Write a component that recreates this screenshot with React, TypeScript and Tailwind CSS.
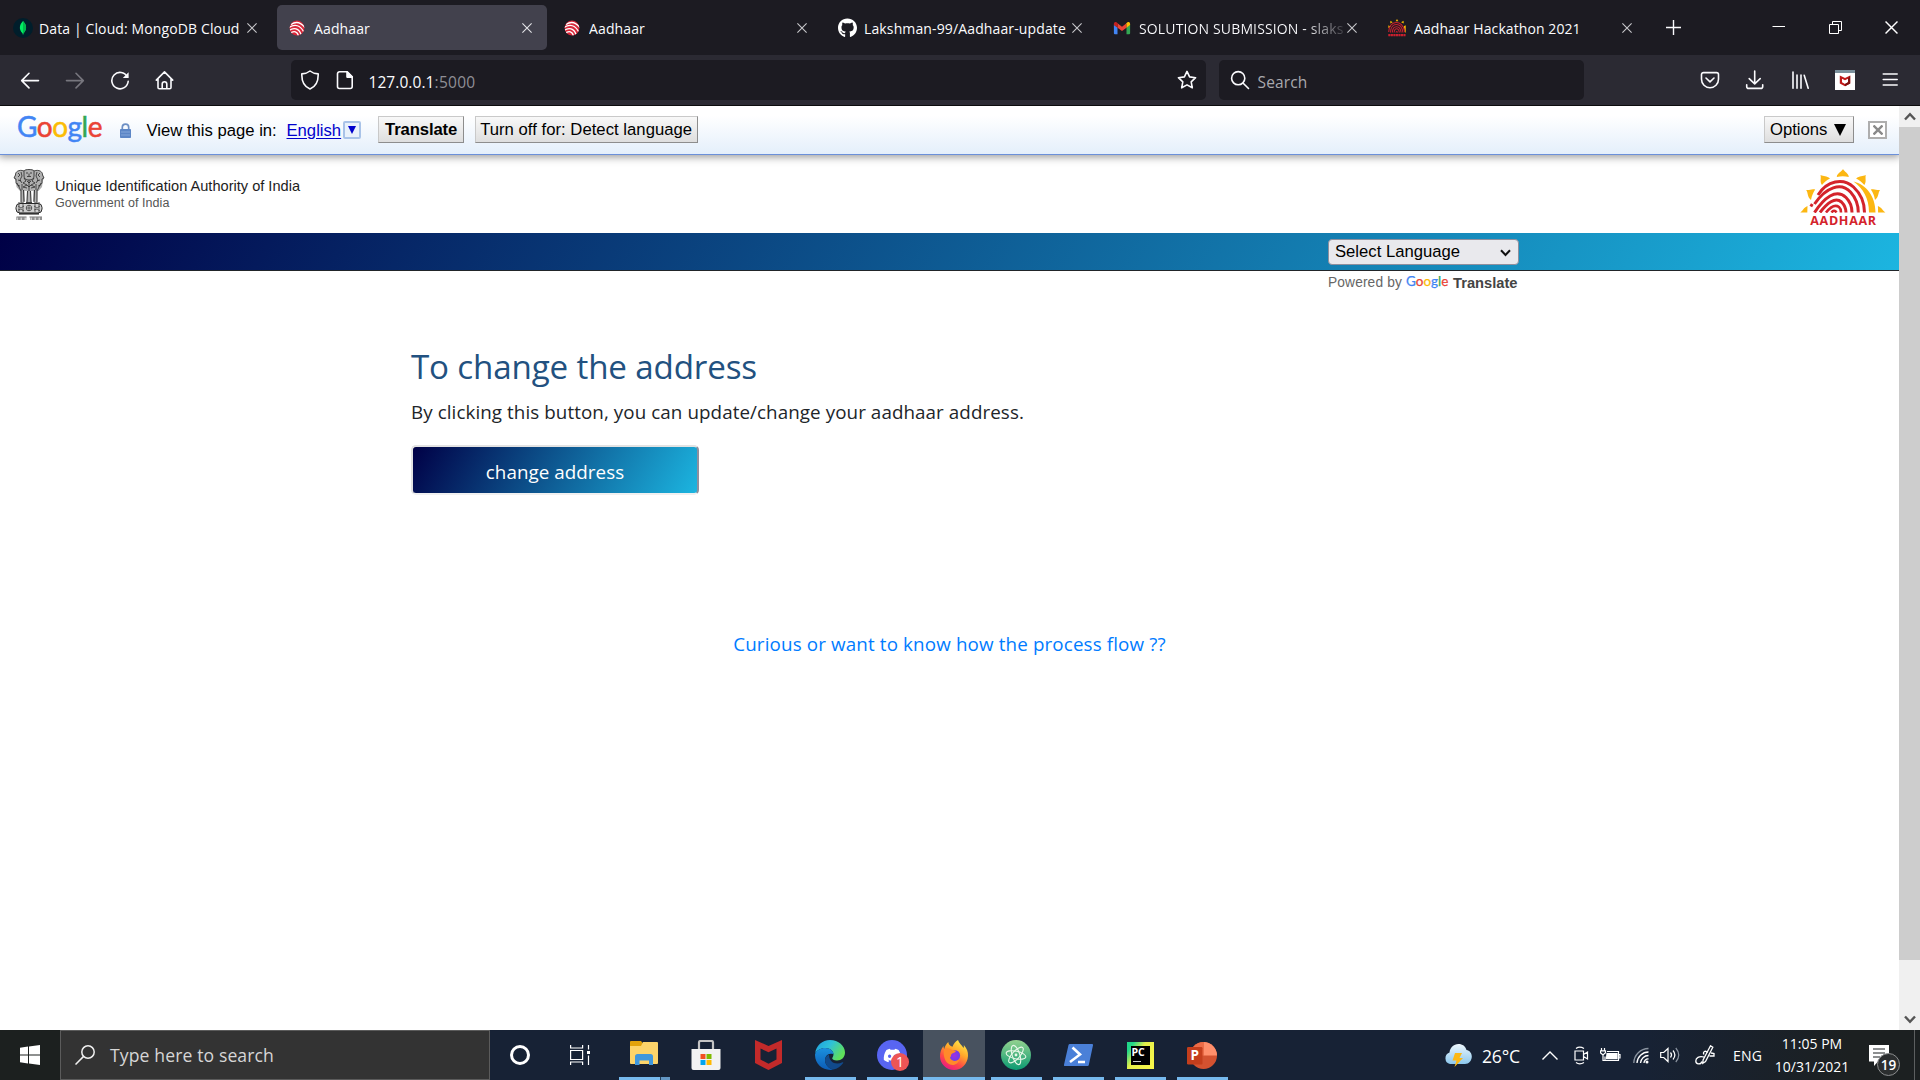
import React, { ReactNode } from "react";
import { FaDiscord, FaGithub } from "react-icons/fa";

const TAB_TEXT = "whitespace-nowrap pt-[2px] text-[14px] leading-[20px] text-[#fbfbfe]";

function Cross({ className }: { className?: string }) {
  return (
    <svg viewBox="0 0 10 10" className={className ?? "h-[10px] w-[10px] text-[#c8c8cc]"} fill="none" stroke="currentColor" strokeWidth="1.1">
      <path d="M.4.4l9.2 9.2M9.6.4L.4 9.6" />
    </svg>
  );
}

function MongoIcon() {
  return (
    <svg viewBox="0 0 20 20" className="h-5 w-5">
      <circle cx="10" cy="10" r="10" fill="#001e2b" />
      <path d="M10 3c3.400 3.600 4.600 8 .5 12.300L10 17l-.5-1.700C5.400 11 6.600 6.600 10 3z" fill="#00ed64" />
      <path d="M10 3c3.400 3.600 4.600 8 .5 12.300L10 17z" fill="#00b84c" />
    </svg>
  );
}

function FingerIcon() {
  return (
    <svg viewBox="0 0 20 20" className="h-5 w-5">
      <defs>
        <clipPath id="fingerClip"><circle cx="9" cy="10" r="7.400" /></clipPath>
      </defs>
      <g clipPath="url(#fingerClip)">
        <rect width="20" height="20" fill="#d8283a" />
        <g fill="none" stroke="#fff" strokeWidth="1.300">
          <path d="M3 6.500C8 3 13 4.500 17 9.500" />
          <path d="M1 9.500C7 5.500 12.500 7.500 15.500 13.500" />
          <path d="M1 12.500C6 9 11 10.500 13 16.500" />
          <path d="M2 15.300C6 12.200 9.500 13.500 10.500 18" />
        </g>
      </g>
    </svg>
  );
}

function GmailIcon() {
  return (
    <svg viewBox="0 0 20 20" className="mr-[2px] h-5 w-5">
      <path d="M1 6.500l4 3V17H2.200A1.200 1.200 0 0 1 1 15.800z" fill="#4285f4" />
      <path d="M15 9.500l4-3v9.300a1.200 1.200 0 0 1-1.200 1.200H15z" fill="#34a853" />
      <path d="M5 4.800l5 3.800 5-3.800v4.900l-5 3.700-5-3.700z" fill="#ea4335" />
      <path d="M1 5.600C1 3.400 3.300 2.900 4.400 4L5 4.800v4.900L1 6.800z" fill="#c5221f" />
      <path d="M19 5.600c0-2.200-2.300-2.700-3.400-1.600l-.6.8v4.900l4-2.900z" fill="#fbbc04" />
    </svg>
  );
}

function SunFavicon() {
  return (
    <svg viewBox="0 0 20 20" className="mr-[2px] h-5 w-5">
      <path d="M8.500 2.500L10 0l1.500 2.500zM2.500 5l.2-3 2.500 1.500zM14.500 3.500L17.300 2l.2 3zM.3 10l.2-3L3 8.500zM17.500 8l2.200-1v8h-1z" fill="#f9b800" />
      <g fill="none" stroke="#c9202e" strokeWidth="1.200">
        <path d="M.8 14.500C.8 1 16.500-.5 18.600 14.500" />
        <path d="M2.800 15C3 3.500 14.800 3 16.600 15" />
        <path d="M4.800 15c.5-8.500 8.500-8.500 9.800 0" />
        <path d="M6.800 15c.7-5.500 4.900-5.500 5.800 0M9 15c.2-1.600 1.400-1.600 1.600 0" />
        <path d="M.3 18h19.400" strokeWidth="2.600" strokeDasharray="2.400 .4" />
      </g>
    </svg>
  );
}

type TabProps = { icon: ReactNode; title: string; track: string; active?: boolean; fade?: boolean };

function Tab({ icon, title, track, active, fade }: TabProps) {
  return (
    <div className={`relative flex h-[45px] w-[270px] shrink-0 items-center rounded-[5px] pl-[11px] ${active ? "bg-[#42414d]" : ""}`}>
      <div className="flex h-5 w-5 shrink-0 items-center justify-center">{icon}</div>
      <div className="ml-[6px] w-[207px] overflow-hidden">
        <div className={`${TAB_TEXT} ${track} ${fade ? "bg-gradient-to-r from-[#fbfbfe] from-80% to-[#fbfbfe]/10 bg-clip-text text-transparent" : ""}`}>{title}</div>
      </div>
      <div className="ml-[1px] shrink-0">
        <Cross className={active ? "h-[10px] w-[10px] text-[#e4e4e8]" : undefined} />
      </div>
    </div>
  );
}

function TabBar() {
  return (
    <div className="flex h-[55px] bg-[#1c1b22] pt-[5px] pl-[2px]">
      <div className="flex gap-[5px]">
        <Tab icon={<MongoIcon />} title="Data | Cloud: MongoDB Cloud" track="tracking-[0.120px]" />
        <Tab icon={<FingerIcon />} title="Aadhaar" track="tracking-[0.13px]" active />
        <Tab icon={<FingerIcon />} title="Aadhaar" track="tracking-[0.13px]" />
        <Tab icon={<FaGithub className="mr-px h-5 w-5 text-white" />} title="Lakshman-99/Aadhaar-update" track="tracking-[0.130px]" />
        <Tab icon={<GmailIcon />} title="SOLUTION SUBMISSION - slaks" track="tracking-[0.14px]" fade />
        <Tab icon={<SunFavicon />} title="Aadhaar Hackathon 2021" track="tracking-[0.08px]" />
      </div>
      <div className="ml-[19px] flex h-[45px] items-center">
        <svg viewBox="0 0 15 15" className="h-[15px] w-[15px]" stroke="#fbfbfe" strokeWidth="1.400"><path d="M7.500 0v15M0 7.500h15" /></svg>
      </div>
      <div className="mr-[22px] ml-auto flex h-[44px] items-center gap-[43.500px]">
        <svg viewBox="0 0 13 13" className="h-[13px] w-[13px]" stroke="#fff" strokeWidth="1"><path d="M.5 5.500h12.500" /></svg>
        <svg viewBox="0 0 13 13" className="h-[13px] w-[13px]" fill="none" stroke="#fff" strokeWidth="1"><path d="M.5 3.500h9v9h-9zM3.500 3.500v-3h9v9h-3" /></svg>
        <Cross className="h-[13px] w-[13px] text-white" />
      </div>
    </div>
  );
}

function ToolIcon({ children, dim }: { children: ReactNode; dim?: boolean }) {
  return (
    <svg viewBox="0 0 20 20" className={`h-5 w-5 shrink-0 ${dim ? "text-[#77767e]" : "text-[#fbfbfe]"}`} fill="none" stroke="currentColor" strokeWidth="1.600" strokeLinecap="round" strokeLinejoin="round">
      {children}
    </svg>
  );
}

function McAfeeMark() {
  return (
    <svg viewBox="0 0 20 20" className="h-5 w-5 shrink-0">
      <rect width="20" height="20" fill="#fff" />
      <rect width="20" height="3" fill="#7b909c" />
      <path d="M4.800 5.400L10 8l5.200-2.600v8L10 16.200l-5.200-2.800zM7 8.700v3.600l3 1.700 3-1.700V8.700l-3 1.500z" fill="#c01818" fillRule="evenodd" />
      <path d="M15.200 5.400v8L10 16.200V14l3-1.700V8.700z" fill="#7c1212" />
    </svg>
  );
}

function Toolbar() {
  return (
    <div className="relative z-20 flex h-[51px] items-center border-b border-[#0c0c0d] bg-[#2b2a33] pl-[20px]">
      <div className="flex w-[271px] shrink-0 gap-[25px]">
        <ToolIcon><path d="M18.500 10.600H1.800M9 3.300L1.700 10.600 9 17.900" /></ToolIcon>
        <ToolIcon dim><path d="M1.500 10.600h16.700M11 3.300l7.300 7.300L11 17.900" /></ToolIcon>
        <ToolIcon><path d="M17.300 6.800A8.200 8.200 0 1 0 18.200 11.300" /><path d="M18.600 2.200V8h-5.800z" fill="currentColor" stroke="none" /></ToolIcon>
        <ToolIcon><path d="M1.300 10.100L9.500 1.900l8.200 8.200M3 8.800v8.700a1.300 1.300 0 0 0 1.300 1.300h10.400a1.300 1.300 0 0 0 1.300-1.300V8.800M7.200 18.600v-4.600a2.300 2.300 0 0 1 4.600 0v4.600" /></ToolIcon>
      </div>
      <div className="flex h-[40px] w-[915px] items-center rounded-[5px] bg-[#1c1b22] pr-[9px] pl-[9px]">
        <ToolIcon><path d="M10 1c2.200 1.800 5 2.700 8.200 2.900C18.400 11 16 16.600 10 19 4 16.600 1.600 11 1.800 3.900 5 3.700 7.800 2.800 10 1z" /></ToolIcon>
        <div className="ml-[15px] flex"><ToolIcon><path d="M4.500 1.800h7.700l5 5v9.700a2 2 0 0 1-2 2H4.500a2 2 0 0 1-2-2V3.800a2 2 0 0 1 2-2z" /><path d="M12 1.800v5.300h5.300z" fill="currentColor" /></ToolIcon></div>
        <div className="ml-[13.500px] flex pt-[3px] text-[15.500px] leading-[20px]">
          <span className="tracking-[0.070px] text-[#fbfbfe]">127.0.0.1</span>
          <span className="tracking-[0.29px] text-[#8f8f96]">:5000</span>
        </div>
        <div className="ml-auto flex"><ToolIcon><path d="M10 1.400l2.600 5.500 6 .8-4.400 4.100 1.100 6-5.300-2.900-5.300 2.900 1.100-6L1.400 7.700l6-.8z" /></ToolIcon></div>
      </div>
      <div className="ml-[13px] flex h-[40px] w-[365px] items-center rounded-[5px] bg-[#1c1b22] pl-[11px]">
        <ToolIcon><circle cx="8.200" cy="8.200" r="6.600" /><path d="M13.200 13.200l5.300 5.300" /></ToolIcon>
        <span className="ml-[7.500px] pt-[3px] text-[15.500px] leading-[20px] tracking-[0.15px] text-[#a9a9ae]">Search</span>
      </div>
      <div className="ml-[116px] flex gap-[25px]">
        <ToolIcon><path d="M3.500 2.600h13a2 2 0 0 1 2 2v4.600a8.500 8.500 0 0 1-17 0V4.600a2 2 0 0 1 2-2z" /><path d="M6 8l4 3.800L14 8" /></ToolIcon>
        <ToolIcon><path d="M9.700 1v12.500M4.200 8.600l5.500 5.300 5.500-5.300M1.700 14.800v1.600a2 2 0 0 0 2 2h12a2 2 0 0 0 2-2v-1.600" /></ToolIcon>
        <ToolIcon><path d="M3 2v16.300M7 5v13.300M11 5v13.300M14.200 5.200l4 13" /></ToolIcon>
        <McAfeeMark />
        <ToolIcon><path d="M3.200 4h14M3.200 9.500h14M3.200 15h14" strokeWidth="1.500" /></ToolIcon>
      </div>
    </div>
  );
}

function GoogleWord({ className }: { className: string }) {
  return (
    <span className={`font-["Lato",sans-serif] ${className}`}>
      <span className="text-[#4285f4]">G</span><span className="text-[#ea4335]">o</span><span className="text-[#fbbc05]">o</span><span className="text-[#4285f4]">g</span><span className="text-[#34a853]">l</span><span className="text-[#ea4335]">e</span>
    </span>
  );
}

const BAR_BUTTON = "flex h-[27px] items-center border border-t-[#c9c9c9] border-l-[#c9c9c9] border-r-[#8d8d8d] border-b-[#8d8d8d] bg-gradient-to-b from-[#f8f8f8] to-[#dedede] whitespace-nowrap";

function TranslateBar() {
  return (
    <div className='relative z-10 flex h-[49px] items-center border-b border-[#6b90da] bg-gradient-to-b from-white from-20% to-[#e4effb] pl-[17px] font-["Liberation_Sans",sans-serif] text-[16.670px] leading-[24px] text-black shadow-[0_1px_8px_1px_#999]'>
      <GoogleWord className="w-[103px] pb-[8px] text-[28px] tracking-[-0.5px] [-webkit-text-stroke:0.5px]" />
      <svg viewBox="0 0 11 15" className="h-[15px] w-[11px]">
        <path d="M2.300 7V4.300a3.200 3.200 0 0 1 6.400 0V7" fill="none" stroke="#6d8fc4" strokeWidth="1.700" />
        <rect y="6" width="11" height="9" rx=".8" fill="#5c86c6" />
        <path d="M1 9h9M1 12h9" stroke="#8fb0e0" strokeWidth=".8" />
      </svg>
      <span className="mt-[2px] ml-[15.500px] w-[140px] whitespace-nowrap">View this page in:</span>
      <span className="mt-[2px] text-[#0000cc] underline underline-offset-2">English</span>
      <span className="ml-[2px] flex h-[18px] w-[18px] items-center justify-center rounded-[2px] border-2 border-[#a9c3e8] bg-[#e9f1fb]">
        <svg viewBox="0 0 8 8" className="h-[8px] w-[8px]"><path d="M0 0h8L4 8z" fill="#0000cc" /></svg>
      </span>
      <div className={`${BAR_BUTTON} mb-px ml-[16.500px] w-[86px] justify-center pl-px font-bold tracking-[-0.120px]`}>Translate</div>
      <div className={`${BAR_BUTTON} mb-px ml-[11px] w-[223px] justify-center tracking-[0.030px]`}>Turn off for: Detect language</div>
      <div className={`${BAR_BUTTON} mb-px ml-auto w-[90px] pl-[5px]`}>
        <span>Options</span>
        <svg viewBox="0 0 12 12" className="ml-[7px] h-[12px] w-[12px]"><path d="M0 0h12L6 12z" fill="#000" /></svg>
      </div>
      <div className="mr-[12px] ml-[14px] flex h-[18px] w-[19px] items-center justify-center border-2 border-[#aeaeae] bg-white">
        <svg viewBox="0 0 10 10" className="h-[10px] w-[10px]" stroke="#8a8a8a" strokeWidth="2.400"><path d="M.5.5l9 9M9.500.5l-9 9" /></svg>
      </div>
    </div>
  );
}

function Emblem() {
  return (
    <svg viewBox="0 0 32 53" className="h-[53px] w-[32px]">
      <path d="M11 2.500C12 .8 20 .8 21.500 2.500 25 1.500 29 3 29.500 6l1.700 3.500-1.400 3.500-.8 6-3.500 4H7l-3.500-4-.8-6-1.700-3.500L2.500 6C3 3 7.500 1.500 11 2.500z" fill="#b0b0b0" />
      <g fill="none" stroke="#2a2a2a" strokeWidth=".8">
        <path d="M11 3c1-2 9-2 10 0v5c0 3-2 4-5 4s-5-1-5-4zM13 5h2m2 0h2M14 8.500h4M16 5.500V8" />
        <path d="M11 3C6 1 2 4 2.500 7L1 10l2 1v4c1 2 3 3 4 3M21 3c5-2 9 1 8.500 4L31 10l-2 1v4c-1 2-3 3-4 3" />
        <path d="M5 5l2 2-2 2M8 4l1 4-2 4 2 3M27 5l-2 2 2 2M24 4l-1 4 2 4-2 3M5 12l3 1M27 12l-3 1" />
        <path d="M11 10l2 3-3 2 4 2-4 2 4 1M21 10l-2 3 3 2-4 2 4 2-4 1M14 13l2 2 2-2M14 17l2 2 2-2M16 12v11M4 15l4 8M28 15l-4 8M9 16v6M23 16v6" />
      </g>
      <path d="M7.500 22h4l.5 11-4 2.500zM20.500 22h4l-.5 13.500-4-2.500zM14 23h4l.5 11h-5z" fill="#b5b5b5" />
      <path d="M8 22v12M10.500 22l.5 12M21.500 22l-.5 12M24 22v12M14.500 23l-.5 11M17.500 23l.5 11M5 35h6M21 35h6M13 34.500h6" stroke="#2a2a2a" strokeWidth=".9" />
      <rect x="3" y="35.500" width="26" height="9.500" rx="4" fill="#cfcfcf" stroke="#2a2a2a" strokeWidth="1" />
      <g fill="none" stroke="#333" strokeWidth=".7">
        <circle cx="16" cy="40" r="2.800" />
        <path d="M16 37v6M13 40h6M5 38l3 2 3-2M5 42l3-1 3 2M21 38l3 2 3-2M21 42l3-1 3 2M6 36v8M10 36v8M22 36v8M26 36v8" />
      </g>
      <path d="M6 45.700h20" stroke="#333" strokeWidth="1.800" />
      <path d="M3.500 49h10M16.500 49h12.500" stroke="#444" strokeWidth=".7" />
      <path d="M3.500 50.600h10M17.500 50.600h11.500" stroke="#666" strokeWidth="2.600" strokeDasharray=".8 1 1.400 .8" />
    </svg>
  );
}

function AadhaarLogo() {
  return (
    <div className="flex w-[86px] flex-col items-center">
      <svg viewBox="0 0 86 45" className="h-[45px] w-[86px]">
        <g fill="#fcb712">
          <path d="M43 1c1.200 2.800 5.500 4 5.800 8-4-.9-8-.9-12 0C37 5 41.800 3.800 43 1z" />
          <path d="M20.500 7c3.300 1.500 6 .5 9.500 3.500-3.200 1.500-5.700 3.600-8 6.500-2.500-3.500-.6-6.500-1.500-10z" />
          <path d="M65.800 7c-3.300 1.500-6 .5-9.700 3.500 3.200 1.500 5.700 3.600 8.200 6.500 2.500-3.500.6-6.500 1.500-10z" />
          <path d="M6.200 22c3.300.6 5.300-1.400 9-.4-2 3-3.300 6-4.200 10.400-3.800-3-2.600-6.500-4.800-10z" />
          <path d="M80 22c-3.300.6-5.300-1.400-9.200-.4 2.300 3 3.300 6 4.200 10.400 3.800-3 2.800-6.500 5-10z" />
          <path d="M.3 44.500C2.800 43 3.500 39.500 7.500 38l-.2 6.500zM85.400 44.500c-2.500-1.500-3.500-5-7.500-6.500l.2 6.500z" />
          <path d="M53.500 13.500C66 16.500 75.500 28 75.500 44.500h-6.500C69 30 63 20.500 53.500 13.500z" />
        </g>
        <g fill="none" stroke="#d4232b" strokeWidth="3">
          <path d="M18 27C27 12.500 43 9.500 53.500 19 60 25 64.500 34 64.500 44.500" />
          <path d="M14.500 36C26 19 41 14 50.500 24 55.500 29.500 58.300 36.500 58.300 44.500" />
          <path d="M10.800 38.500l1.500-2.500" />
          <path d="M14.500 44.500C24 30 36 20 46 29.500 50 33.500 52 39 52 44.500" />
          <path d="M20 44.500C27 35.500 35 28.500 41.500 34 44.500 37 46 40.500 46 44.500" />
          <path d="M26 44.500c4-5 9-8.500 13-5.500 1.500 1.300 2 3 2 5.500M31.500 44.500c1.500-2 3.500-2.500 5 0" strokeWidth="2.600" />
        </g>
      </svg>
      <span className='mt-[1px] pl-[1px] font-["Open_Sans",sans-serif] text-[12.500px] leading-[14px] font-bold tracking-[0.700px] text-[#d4232b]'>AADHAAR</span>
    </div>
  );
}

function SiteHeader() {
  return (
    <header className="flex h-[78px] justify-between pr-[13px] pl-[13px]">
      <div className="flex">
        <div className="pt-[13px]"><Emblem /></div>
        <div className='ml-[10px] pt-[22px] font-["Liberation_Sans",sans-serif] whitespace-nowrap'>
          <div className="text-[14.600px] leading-[18px] text-[#1d1d1d]">Unique Identification Authority of India</div>
          <div className="text-[12.500px] leading-[17px] tracking-[0.060px] text-[#555]">Government of India</div>
        </div>
      </div>
      <div className="pt-[13px]"><AadhaarLogo /></div>
    </header>
  );
}

function Banner() {
  return (
    <div className='flex h-[38px] border-b border-[#212529] bg-[linear-gradient(120deg,#000046,#1cb5e0)] pl-[1328px] font-["Liberation_Sans",sans-serif]'>
      <div className="w-[191px] pt-[6px]">
        <div className="flex h-[26px] items-center justify-between rounded-[4px] border border-[#8f8f9d] bg-[#e9e9ed] pr-[7px] pl-[6px] text-[16.670px] leading-[24px] text-black">
          <span>Select Language</span>
          <svg viewBox="0 0 11 8" className="mt-[2px] h-[8px] w-[11px]" fill="none" stroke="#111" strokeWidth="2"><path d="M1 1.200l4.500 4.800L10 1.200" /></svg>
        </div>
        <div className="mt-[9px] flex h-[16px] items-center text-[13.750px] leading-[16px] whitespace-nowrap">
          <span className="w-[78px] pt-px tracking-[0.130px] text-[#666]">Powered by</span>
          <GoogleWord className="w-[47px] pb-[2px] text-[13.500px] [-webkit-text-stroke:0.25px]" />
          <span className="pt-px text-[14.700px] font-bold text-[#444]">Translate</span>
        </div>
      </div>
    </div>
  );
}

function PageBody() {
  return (
    <main className="flex flex-col">
      <div className="mt-[75px] ml-[411px] flex flex-col items-start">
        <h1 className="text-[33.200px] leading-[42px] tracking-[-0.170px] text-[#225180]">To change the address</h1>
        <p className="mt-[9px] text-[18.800px] leading-[30px] tracking-[0.080px] text-[#212529]">By clicking this button, you can update/change your aadhaar address.</p>
        <button className="mt-[18px] flex h-[50px] w-[288px] items-center justify-center rounded-[5px] border-2 border-t-[#e3e3e3] border-r-[#8f8f9d] border-b-[#f0f0f0] border-l-[#e3e3e3] bg-[linear-gradient(120deg,#000046,#1cb5e0)] pt-[3px] text-[18.800px] leading-[24px] tracking-[0.060px] text-white">
          change address
        </button>
      </div>
      <a className="mt-[134px] text-center text-[18.800px] leading-[30px] tracking-[0.138px] text-[#007bff]">Curious or want to know how the process flow ??</a>
    </main>
  );
}

function Chevron({ up }: { up?: boolean }) {
  return (
    <svg viewBox="0 0 12 9" className="h-[9px] w-[12px]" fill="none" stroke="#555" strokeWidth="2.400">
      <path d={up ? "M1 7.500L6 2.200l5 5.300" : "M1 1.500l5 5.300 5-5.300"} />
    </svg>
  );
}

function Scrollbar() {
  return (
    <div className="flex w-[21px] shrink-0 flex-col bg-[#f0f0f0]">
      <div className="flex h-[21px] items-center justify-center pb-px">
        <Chevron up />
      </div>
      <div className="h-[833px] bg-[#cdcdcd]" />
      <div className="mt-auto flex h-[21px] items-center justify-center">
        <Chevron />
      </div>
    </div>
  );
}

function TaskCell({ children, open, active, stacked }: { children: ReactNode; open?: boolean; active?: boolean; stacked?: boolean }) {
  return (
    <div className={`flex h-[50px] w-[62px] flex-col items-center ${active ? "bg-[#48525f]" : ""}`}>
      <div className="flex h-[47px] items-center pt-[3px]">{children}</div>
      {open && (
        <div className={`flex h-[3px] ${active ? "w-full" : "w-[51px]"}`}>
          <div className="flex-1 bg-[#76b9ed]" />
          {stacked && <div className="w-[10px] border-l border-[#24405c] bg-[#6397c4]" />}
        </div>
      )}
    </div>
  );
}

function TaskbarApps() {
  return (
    <div className="flex">
      <TaskCell open stacked>
        <svg viewBox="0 0 28 28" className="h-[28px] w-[28px]">
          <path d="M0 1a1 1 0 0 1 1-1h10l2 2.500V8H0z" fill="#e2a30b" />
          <path d="M0 5h11l2-4h14a1 1 0 0 1 1 1v20a1 1 0 0 1-1 1H1a1 1 0 0 1-1-1z" fill="#fcd46a" />
          <path d="M5 24v-8.500A2.500 2.500 0 0 1 7.500 13h13a2.500 2.500 0 0 1 2.500 2.500V24h-4v-4.500H9.500V24z" fill="#3f97dd" />
        </svg>
      </TaskCell>
      <TaskCell>
        <svg viewBox="0 0 30 30" className="h-[30px] w-[30px]">
          <path d="M8 12V2.500A1.500 1.500 0 0 1 9.500 1h11A1.500 1.500 0 0 1 22 2.500V12" fill="none" stroke="#c4c4c4" strokeWidth="2.200" />
          <path d="M.5 9h29v19a2 2 0 0 1-2 2h-25a2 2 0 0 1-2-2z" fill="#f2f2f2" />
          <path d="M9.500 14h5v5h-5z" fill="#f25022" /><path d="M15.500 14h5v5h-5z" fill="#7fba00" />
          <path d="M9.500 20h5v5h-5z" fill="#00a4ef" /><path d="M15.500 20h5v5h-5z" fill="#ffb900" />
        </svg>
      </TaskCell>
      <TaskCell>
        <svg viewBox="0 0 27 30" className="h-[30px] w-[27px]">
          <path d="M0 0l13.500 6L27 0v23l-13.500 7L0 23zM5.500 8.500v11l8 4.300 8-4.300v-11l-8 3.700z" fill="#c32a2a" fillRule="evenodd" />
        </svg>
      </TaskCell>
      <TaskCell open>
        <svg viewBox="0 0 30 30" className="h-[30px] w-[30px]">
          <defs>
            <linearGradient id="edgeTop" x1="0" y1="0" x2="1" y2=".5"><stop offset="0" stopColor="#1b9de2" /><stop offset=".5" stopColor="#2fc1d8" /><stop offset="1" stopColor="#5fe05a" /></linearGradient>
            <linearGradient id="edgeLow" x1="0" y1="0" x2="0" y2="1"><stop offset="0" stopColor="#1b90de" /><stop offset="1" stopColor="#0c5cb5" /></linearGradient>
          </defs>
          <path d="M.2 13.500C1 5.500 7.300 0 15 0c8.500 0 15 6 15 12.500 0 5-3.700 8-8 8-3.300 0-4.800-1.300-4.800-2.200 0-.8 1.300-1.500 1.300-4C18.500 10.800 14.500 8 10.500 8 5.500 8 1.500 10.500.2 13.500z" fill="url(#edgeTop)" />
          <path d="M.1 14C1.500 10.500 5.500 8 10.500 8c4 0 8 2.800 8 6.300-5.500-2-8.500 2.200-8.500 6 0 4.200 3.500 8 8.300 9.300C8.500 31.500-.8 24 .1 14z" fill="url(#edgeLow)" />
          <path d="M14 14.500c-3 1.300-4 3.500-4 5.800 0 4.200 3.500 8.200 8.300 9.300 4-.5 7.700-3.300 9.900-6.600.3-.6-.2-1-.7-.7-7 3.300-13.700-.3-13.500-7.800z" fill="#114a8b" />
        </svg>
      </TaskCell>
      <TaskCell open>
        <div className="relative flex h-[30px] w-[30px] items-center justify-center rounded-full bg-[#5865f2]">
          <FaDiscord className="h-[19px] w-[19px] text-white" />
          <span className="absolute top-[13px] left-[14px] flex h-[18px] w-[18px] items-center justify-center rounded-full bg-[#ed5555] text-[14px] leading-[18px] text-white">1</span>
        </div>
      </TaskCell>
      <TaskCell open active>
        <svg viewBox="0 0 30 30" className="h-[30px] w-[30px]">
          <defs>
            <linearGradient id="foxBody" x1=".8" y1="0" x2=".25" y2="1"><stop offset="0" stopColor="#fff04a" /><stop offset=".4" stopColor="#ffa42a" /><stop offset=".7" stopColor="#ff4a45" /><stop offset="1" stopColor="#e8158a" /></linearGradient>
            <radialGradient id="foxGlobe"><stop offset="0" stopColor="#a32fe0" /><stop offset="1" stopColor="#6a3df0" /></radialGradient>
          </defs>
          <path d="M19 0c1 3.500 4 5 5.500 8 .5-1 .5-2 .3-3C28 8.500 29.200 12 29 16c-.5 8-6.500 14-14 14S1 24 1 16.500c0-4 1.200-8 3.500-10.500 0 1.200.2 2.200.8 3 .5-2.500 2-5.500 4-7 .2 2.500 1.700 4 4.200 4.800C14 4.500 16.500 1.500 19 0z" fill="url(#foxBody)" />
          <circle cx="15.500" cy="15.500" r="5.600" fill="url(#foxGlobe)" />
          <path d="M5.300 9c3-1.500 6-.7 7.700 1 1.500 0 3 .2 4 1-.5 1.700-3 2-4.500 3-.5 1-.3 2.500-1.500 3.500 1 3.500 6 5 9.500 1.500-1 5-5.500 7-9.500 5.500C6 22.700 3.500 15 5.300 9z" fill="#ff8a2a" />
        </svg>
      </TaskCell>
      <TaskCell open>
        <svg viewBox="0 0 30 30" className="h-[30px] w-[30px]">
          <defs><linearGradient id="atomBg" x1="0" y1="0" x2="0" y2="1"><stop offset="0" stopColor="#93d28f" /><stop offset="1" stopColor="#0a9a72" /></linearGradient></defs>
          <circle cx="15" cy="15" r="15" fill="url(#atomBg)" />
          <g fill="none" stroke="#e8f7e8" strokeWidth="1.100">
            <ellipse cx="15" cy="15" rx="3.800" ry="10" transform="rotate(-18 15 15)" />
            <ellipse cx="15" cy="15" rx="3.800" ry="10" transform="rotate(42 15 15)" />
            <ellipse cx="15" cy="15" rx="3.800" ry="10" transform="rotate(102 15 15)" />
          </g>
          <circle cx="15" cy="15" r="1.400" fill="#e8f7e8" />
        </svg>
      </TaskCell>
      <TaskCell open>
        <svg viewBox="0 0 29 22" className="h-[22px] w-[29px]">
          <path d="M6 0h22a1 1 0 0 1 1 1.200L24.800 21a1.300 1.300 0 0 1-1.300 1H1a1 1 0 0 1-1-1.200L4.500 1A1.500 1.500 0 0 1 6 0z" fill="#4a80d8" />
          <path d="M8.500 3.500l7.500 7-10 7.500M14 18h7" fill="none" stroke="#fff" strokeWidth="2.600" />
        </svg>
      </TaskCell>
      <TaskCell open>
        <div className="relative h-[27px] w-[27px] bg-[linear-gradient(125deg,#21d789_15%,#e5f04a_42%,#fcf84a)] p-[4px]">
          <div className="h-[19px] w-[19px] bg-black pl-[1px] text-[10.500px] leading-[12px] font-bold tracking-[-0.200px] text-white">PC
            <div className="mt-[3px] ml-[1px] h-[1.500px] w-[8px] bg-white/80" />
          </div>
        </div>
      </TaskCell>
      <TaskCell open>
        <div className="relative h-[27px] w-[30px]">
          <svg viewBox="0 0 30 27" className="h-[27px] w-[30px]">
            <circle cx="16.500" cy="13.500" r="13.500" fill="#d35230" />
            <path d="M16.500 0A13.500 13.500 0 0 1 30 13.500H16.500z" fill="#ff8f6b" />
            <path d="M16.500 0A13.500 13.500 0 0 0 3 13.500h13.500z" fill="#ed6c47" />
            <rect y="5" width="15.500" height="17.500" rx="1.200" fill="#c43e1c" />
          </svg>
          <span className="absolute top-[5px] left-[3.500px] text-[13.500px] leading-[17px] font-bold text-white">P</span>
        </div>
      </TaskCell>
    </div>
  );
}

function Tray() {
  return (
    <div className="ml-auto flex h-[50px] w-[480px] shrink-0 items-center text-[14px] whitespace-nowrap text-white">
      <svg viewBox="0 0 28 23" className="ml-[4px] h-[23px] w-[28px] shrink-0">
        <defs><linearGradient id="cloud" x1="0" y1="0" x2="0" y2="1"><stop offset="0" stopColor="#eef7fd" /><stop offset="1" stopColor="#8cc8ee" /></linearGradient></defs>
        <path d="M6 20a6 6 0 0 1-.5-11.500C6 4 9.500 0 14.500 0c4 0 7 2.300 8 6 3 .5 5.300 3 5.300 6.500 0 4-2.800 7.500-6.800 7.500z" fill="url(#cloud)" />
        <path d="M11 9h7l-2.500 5H19l-8.500 9 2-6.500H8.500z" fill="#fdb813" />
      </svg>
      <span className="ml-[10px] w-[39px] pt-[2px] text-[17.600px] leading-[24px] tracking-[-0.190px]">26°C</span>
      <svg viewBox="0 0 16 9" className="ml-[21px] h-[9px] w-[16px] shrink-0" fill="none" stroke="#fff" strokeWidth="1.400"><path d="M.5 8.500L8 1l7.500 7.500" /></svg>
      <svg viewBox="0 0 15 19" className="ml-[16px] h-[19px] w-[15px] shrink-0" fill="none" stroke="#fff" strokeWidth="1.200"><path d="M1 5h8.500v9H1zM9.500 8.500l4-2.500v7l-4-2.500M2 2.500c2-1.500 5.500-1.500 8 0M2 16.500c2 1.500 5.500 1.500 8 0" /></svg>
      <svg viewBox="0 0 21 14" className="ml-[11px] h-[14px] w-[21px] shrink-0" fill="none" stroke="#fff" strokeWidth="1.200"><path d="M5 8.500v4h13.500V3.500H7M18.500 6.500h1.500v3.500h-1.500M1.500 0v2.500M4.500 0v2.500M.5 2.800h5v2L3 7 .5 4.800zM3 7v5.500h2" /><path d="M7 5.500h10v5.200H6.500z" fill="#fff" /></svg>
      <svg viewBox="0 0 17 17" className="ml-[12px] h-[17px] w-[17px] shrink-0" fill="none" stroke="#fff" strokeWidth="1.300">
        <path d="M.8 16A15 15 0 0 1 15.500 1.500" stroke="#8b94a0" /><path d="M4 16A11.500 11.500 0 0 1 15.500 5M7.500 16a8 8 0 0 1 8-7.500M11 16a4 4 0 0 1 4.500-4" /><circle cx="14" cy="15" r="1.500" fill="#fff" stroke="none" />
      </svg>
      <svg viewBox="0 0 20 18" className="ml-[10px] h-[18px] w-[20px] shrink-0" fill="none" stroke="#fff" strokeWidth="1.200"><path d="M.7 6.500h3L8 2.500v13l-4.300-4h-3zM10.500 6.500c1.300 1.500 1.300 3.500 0 5M13 4.500c2.500 3 2.500 6 0 9" /><path d="M15.800 2c3.800 4.500 3.800 9.500 0 14" stroke="#8b94a0" /></svg>
      <svg viewBox="0 0 20 20" className="ml-[15px] h-[20px] w-[20px] shrink-0" fill="none" stroke="#fff" strokeWidth="1.300"><path d="M15.500.8l2.300 1.500-7.300 14.200-2.700 1.700.3-3.300zM9 12C4 10.500.8 13 .8 16c0 3.500 5.200 4 6 .5M12.500 8c-2-3.500-5-1-3.500 1.500M14.500 11h4.500V8.500l-3-.5" /></svg>
      <span className="ml-[18px] w-[28px] pt-px leading-[20px] tracking-[0.160px]">ENG</span>
      <div className="ml-[10px] w-[82px] pb-px text-center leading-[23px]">
        <div>11:05 PM</div>
        <div>10/31/2021</div>
      </div>
      <div className="relative ml-[16px] h-[50px] w-[32px] pt-[15px]">
        <svg viewBox="0 0 20 21" className="h-[21px] w-[20px]"><path d="M0 0h20v16.500H9L5 21v-4.500H0z" fill="#fff" /><path d="M4 4h12M4 8h12M4 12h7" stroke="#1d2122" strokeWidth="1.200" /></svg>
        <span className="absolute top-[23px] left-[8px] flex h-[23px] w-[23px] items-center justify-center rounded-full border border-[#8b8d8e] bg-[#2b2e2f] text-[13.500px] leading-[20px] font-semibold">19</span>
      </div>
      <div className="ml-[13px] h-[50px] w-px bg-[#5c5f60]" />
    </div>
  );
}

function Taskbar() {
  return (
    <div className="flex h-[50px] bg-[linear-gradient(90deg,#1c201f_0px,#1c201f_60px,#172235_490px,#172235_1640px,#1c2021_1850px)]">
      <div className="flex w-[60px] items-center pl-[20px]">
        <svg viewBox="0 0 20 20" className="h-[20px] w-[20px]" fill="#fff"><path d="M0 2.800l8-1.200v7.900H0zM9 1.400L20 0v9.500H9zM0 10.500h8v7.900l-8-1.200zM9 10.500h11V20L9 18.600z" /></svg>
      </div>
      <div className="flex w-[430px] items-center border border-[#5b5b5b] bg-[#333] pl-[14px]">
        <svg viewBox="0 0 20 20" className="h-[20px] w-[20px]" fill="none" stroke="#f0f0f0" strokeWidth="1.500"><circle cx="13" cy="7" r="6.200" /><path d="M8.600 11.400L.5 19.500" /></svg>
        <span className="ml-[15px] pb-px text-[17.600px] leading-[24px] tracking-[0.110px] text-[#d6d6d6]">Type here to search</span>
      </div>
      <div className="flex w-[60px] items-center justify-center">
        <div className="h-[20px] w-[20px] rounded-full border-[3px] border-white" />
      </div>
      <div className="flex w-[63px] items-center pl-[20px]">
        <svg viewBox="0 0 20 20" className="h-[20px] w-[20px]" fill="none" stroke="#fff" strokeWidth="1.200"><path d="M.6 5.500h12v9H.6zM.6 0v3h12V0M.6 20v-3h12v3M18.500 0v4.500M18.500 10.500V20" /><path d="M17 6h3v3h-3z" fill="#fff" stroke="none" /></svg>
      </div>
      <TaskbarApps />
      <Tray />
    </div>
  );
}

export default function App() {
  return (
    <div className='flex h-[1080px] w-[1920px] flex-col overflow-hidden bg-white font-["Open_Sans","Noto_Sans",sans-serif]'>
      <TabBar />
      <Toolbar />
      <div className="flex h-[924px]">
        <div className="w-[1899px] overflow-hidden">
          <TranslateBar />
          <SiteHeader />
          <Banner />
          <PageBody />
        </div>
        <Scrollbar />
      </div>
      <Taskbar />
    </div>
  );
}
